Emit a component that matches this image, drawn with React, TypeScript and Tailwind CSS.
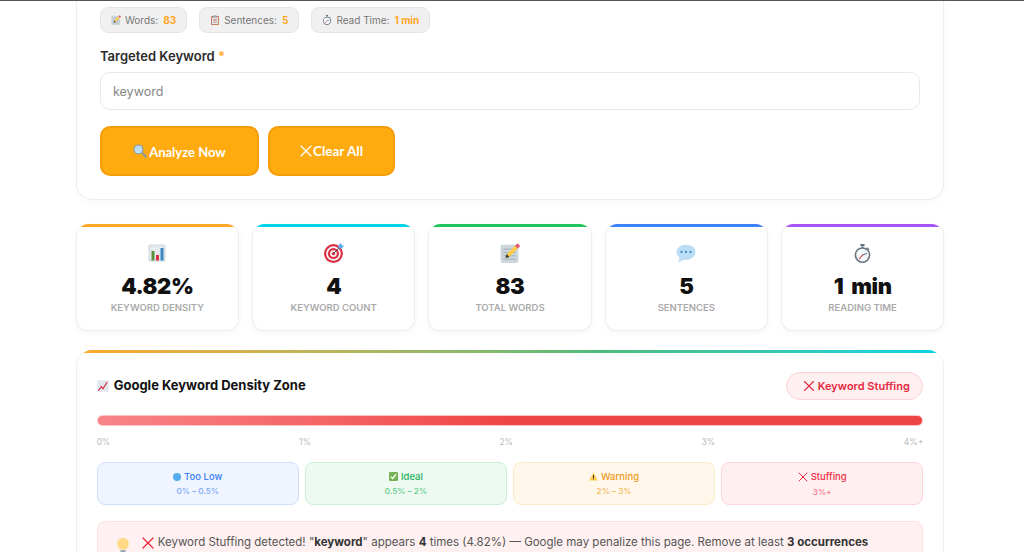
import { X } from 'lucide-react';
import type { ReactNode } from 'react';

const sans = 'font-["Inter","Noto_Sans",sans-serif]';

function MemoIcon({ className }: { className: string }) {
  return (
    <svg viewBox="0 0 36 36" className={className}>
      <rect x="1" y="3" width="32" height="33" rx="4" fill="#CCD6DD" />
      <path d="M6 11h22M6 17h22M6 23h22M6 29h22" stroke="#99AAB5" strokeWidth="1.5" />
      <path d="M12 20 27 5l5 5-15 15-7 2z" fill="#FFCC4D" />
      <path d="M27 5l3-3a2 2 0 0 1 3 0l2 2a2 2 0 0 1 0 3l-3 3z" fill="#EA596E" />
      <path d="M12 20l-2 7 7-2z" fill="#292F33" />
    </svg>
  );
}

function ClipboardIcon({ className }: { className: string }) {
  return (
    <svg viewBox="0 0 36 36" className={className}>
      <rect x="4" y="4" width="28" height="32" rx="3" fill="#C1694F" />
      <rect x="7" y="8" width="22" height="25" fill="#E1E8ED" />
      <rect x="12" y="1" width="12" height="8" rx="2" fill="#9AAAB4" />
      <path d="M11 16h14M11 21h14M11 26h14" stroke="#C1694F" strokeWidth="2" />
    </svg>
  );
}

function StopwatchIcon({ className }: { className: string }) {
  return (
    <svg viewBox="0 0 36 36" className={className}>
      <rect x="14" y="0" width="8" height="4" rx="1" fill="#66757F" />
      <rect x="16.5" y="3" width="3" height="5" fill="#66757F" />
      <path d="M27 6l4 4-2 2-4-4z" fill="#66757F" />
      <circle cx="18" cy="21" r="15" fill="#66757F" />
      <circle cx="18" cy="21" r="12" fill="#F5F8FA" />
      <path d="M18 21l8-3" stroke="#66757F" strokeWidth="2" strokeLinecap="round" />
      <path d="M18 21l-6 7" stroke="#DD2E44" strokeWidth="2" strokeLinecap="round" />
    </svg>
  );
}

function ChartIcon({ className }: { className: string }) {
  return (
    <svg viewBox="0 0 36 36" className={className}>
      <rect x="1" y="1" width="34" height="34" rx="3" fill="#CCD6DD" />
      <rect x="3" y="3" width="30" height="30" fill="#E1E8ED" />
      <path d="M3 10h30M3 17h30M3 24h30M11 3v30M18 3v30M26 3v30" stroke="#F5F8FA" strokeWidth="1" />
      <rect x="7" y="14" width="6" height="19" fill="#5C913B" />
      <rect x="16" y="22" width="6" height="11" fill="#DD2E44" />
      <rect x="25" y="8" width="6" height="25" fill="#3B88C3" />
    </svg>
  );
}

function TargetIcon({ className }: { className: string }) {
  return (
    <svg viewBox="0 0 36 36" className={className}>
      <circle cx="17" cy="19" r="17" fill="#DD2E44" />
      <circle cx="17" cy="19" r="13" fill="#F5F8FA" />
      <circle cx="17" cy="19" r="10" fill="#DD2E44" />
      <circle cx="17" cy="19" r="6" fill="#F5F8FA" />
      <circle cx="17" cy="19" r="3" fill="#DD2E44" />
      <path d="M17 19 30 6" stroke="#292F33" strokeWidth="1.5" />
      <path d="M26 10V4l5-4 1 4 4 1-4 5z" fill="#55ACEE" />
    </svg>
  );
}

function SpeechIcon({ className }: { className: string }) {
  return (
    <svg viewBox="0 0 36 36" className={className}>
      <path d="M18 3C8 3 1 9 1 16c0 4 2 7 5 10 0 3-1 6-3 8 4 0 8-2 10-4 2 .5 3 .5 5 .5 10 0 17-7 17-14.500S28 3 18 3z" fill="#BBDDF5" />
      <circle cx="10" cy="16" r="2" fill="#3B88C3" />
      <circle cx="18" cy="16" r="2" fill="#3B88C3" />
      <circle cx="26" cy="16" r="2" fill="#3B88C3" />
    </svg>
  );
}

function TrendIcon({ className }: { className: string }) {
  return (
    <svg viewBox="0 0 36 36" className={className}>
      <rect x="1" y="1" width="34" height="34" rx="3" fill="#E1E8ED" />
      <path d="M4 32 13 20l5 6L31 6" fill="none" stroke="#DD2E44" strokeWidth="3.500" />
    </svg>
  );
}

function SearchIcon({ className }: { className: string }) {
  return (
    <svg viewBox="0 0 36 36" className={className}>
      <path d="M21 23l3-3 11 11a2 2 0 0 1-4 4z" fill="#8899A6" />
      <circle cx="14" cy="14" r="13" fill="#8899A6" />
      <circle cx="14" cy="14" r="10" fill="#BBDDF5" />
    </svg>
  );
}

function Chip({ icon, label, value }: { icon: ReactNode; label: string; value: string }) {
  return (
    <div className="flex h-[26px] items-center gap-[4px] rounded-lg border border-[#e5e5e5] bg-[#f0f0f0] px-[10px] text-[10px] text-[#777]">
      {icon}
      <span className="mr-[1px]">{label}</span>
      <b className="font-bold text-[#ffa726]">{value}</b>
    </div>
  );
}

const stats = [
  { icon: <ChartIcon className="h-[18px] w-[18px]" />, value: '4.82%', label: 'KEYWORD DENSITY', bar: 'before:bg-[#ffa726]' },
  { icon: <TargetIcon className="h-[20px] w-[20px]" />, value: '4', label: 'KEYWORD COUNT', bar: 'before:bg-[#00d4e8]' },
  { icon: <MemoIcon className="h-[20px] w-[20px]" />, value: '83', label: 'TOTAL WORDS', bar: 'before:bg-[#22c55e]' },
  { icon: <SpeechIcon className="h-[20px] w-[20px]" />, value: '5', label: 'SENTENCES', bar: 'before:bg-[#3b82f6]' },
  { icon: <StopwatchIcon className="h-[19px] w-[19px]" />, value: '1 min', label: 'READING TIME', bar: 'before:bg-[#a855f7]' },
];

const zones = [
  { title: 'Too Low', range: '0% – 0.5%', box: 'border-[#cfe0fd] bg-[#eff4fe]', head: 'text-[#3b82f6]', sub: 'text-[#7aa8f8]', icon: <span className="h-2 w-2 rounded-full bg-[#55acee]" /> },
  {
    title: 'Ideal',
    range: '0.5% – 2%',
    box: 'border-[#c9f0d6] bg-[#edf9f1]',
    head: 'text-[#22b458]',
    sub: 'text-[#62cd8a]',
    icon: (
      <svg viewBox="0 0 36 36" className="h-[9px] w-[9px]">
        <rect width="36" height="36" rx="4" fill="#77B255" />
        <path d="M8 19l7 7L28 9" fill="none" stroke="#fff" strokeWidth="5" />
      </svg>
    ),
  },
  {
    title: 'Warning',
    range: '2% – 3%',
    box: 'border-[#fdeac6] bg-[#fff7e9]',
    head: 'text-[#ee9a1c]',
    sub: 'text-[#f5b95c]',
    icon: (
      <svg viewBox="0 0 36 36" className="h-[9px] w-[9px]">
        <path d="M18 2 35 34H1z" fill="#FFCC4D" />
        <path d="M16 12h4v12h-4zM16 26h4v4h-4z" fill="#292F33" />
      </svg>
    ),
  },
  { title: 'Stuffing', range: '3%+', box: 'border-[#fdd5d9] bg-[#feeff0]', head: 'text-[#ef2f45]', sub: 'text-[#f47a88]', icon: <X className="-mx-[3px] h-4 w-4 text-[#e8283f]" strokeWidth={1.5} /> },
];

const scale = ['0%', '1%', '2%', '3%', '4%+'];

export default function App() {
  return (
    <div className={`${sans} h-[552px] w-[1024px] overflow-hidden border-t border-[#555] bg-white pl-[75.700px]`}>
      <div className="w-[868.600px]">
        <section className="rounded-b-2xl border border-t-0 border-[#eeeeee] px-[23.300px] pt-[6px] pb-[23px] shadow-[0_2px_8px_rgba(0,0,0,0.03)]">
          <div className="flex gap-3">
            <Chip icon={<MemoIcon className="h-[10px] w-[10px]" />} label="Words:" value="83" />
            <Chip icon={<ClipboardIcon className="h-[10px] w-[10px]" />} label="Sentences:" value="5" />
            <Chip icon={<StopwatchIcon className="h-[10px] w-[10px]" />} label="Read Time:" value="1 min" />
          </div>
          <div className="mt-[14px] text-[13px] leading-[18px] font-semibold text-[#2b2b2b]">
            Targeted Keyword <span className="text-[#ffa726]">*</span>
          </div>
          <input
            readOnly
            placeholder="keyword"
            className="mt-[7px] block h-[38px] w-full rounded-[10px] border border-[#e8e8e8] px-3 text-[12.500px] outline-none placeholder:text-[#888]"
          />
          <div className="mt-[16px] flex gap-[9px]">
            <button className="flex h-[50px] w-[159px] items-center justify-center gap-[2px] rounded-[10px] border-2 border-[#f59e0b] bg-[#ffab10] font-['Lato',sans-serif] text-[13px] leading-[20px] font-bold text-white">
              <SearchIcon className="h-[14px] w-[14px]" />
              <span className="translate-y-[1px]">Analyze Now</span>
            </button>
            <button className="flex h-[50px] w-[127px] items-center justify-center rounded-[10px] border-2 border-[#f59e0b] bg-[#ffab10] font-['Lato',sans-serif] text-[13.500px] font-bold text-white">
              <X className="-ml-[4px] -mr-[3px] h-5 w-5" strokeWidth={1.5} />
              Clear All
            </button>
          </div>
        </section>

        <div className="mt-6 grid grid-cols-5 gap-[13px]">
          {stats.map((s) => (
            <div
              key={s.label}
              className={`relative h-[107px] overflow-hidden rounded-xl border border-t-0 border-[#eeeeee] bg-white pt-[18px] text-center shadow-[0_2px_6px_rgba(0,0,0,0.04)] before:absolute before:inset-x-0 before:top-0 before:h-[3px] before:content-[''] ${s.bar}`}
            >
              <div className="flex h-[22px] items-center justify-center">{s.icon}</div>
              <div className="mt-[9px] text-[22px] leading-[26px] font-black tracking-[-0.4px] text-[#111] [word-spacing:4px]">{s.value}</div>
              <div className="mt-[2px] text-[9.500px] leading-[14px] font-semibold text-[#aaa]">{s.label}</div>
            </div>
          ))}
        </div>

        <section className="relative mt-[19px] h-[260px] overflow-hidden rounded-t-2xl border border-t-0 border-[#eeeeee] px-[20px] pt-[22px] before:absolute before:inset-x-0 before:top-0 before:h-[3px] before:bg-gradient-to-r before:from-[#ffa726] before:via-[#4ebb7a] before:via-60% before:to-[#00d4e8] before:content-['']">
          <div className="flex h-[28px] items-center justify-between">
            <h2 className="flex items-center gap-[5px] text-[13px] font-bold text-[#111]">
              <TrendIcon className="h-[12px] w-[12px]" />
              Google Keyword Density Zone
            </h2>
            <div className="flex h-[28px] w-[137px] items-center justify-center rounded-full border border-[#fdd0d4] bg-[#feeff0] text-[11px] font-semibold text-[#e8283f]">
              <X className="h-[18px] w-[18px]" strokeWidth={1.5} />
              Keyword Stuffing
            </div>
          </div>
          <div className="mt-[15px] h-[11px] rounded-full border border-[#fbc4c6] bg-gradient-to-r from-[#f88489] via-[#ef4444] via-50% to-[#ef4444]" />
          <div className="mt-[10px] flex justify-between text-[8.500px] leading-[12px] text-[#bbb]">
            {scale.map((t) => (
              <span key={t}>{t}</span>
            ))}
          </div>
          <div className="mt-[14px] grid grid-cols-4 gap-[6px]">
            {zones.map((z) => (
              <div key={z.title} className={`flex h-[43px] flex-col items-center justify-center rounded-lg border ${z.box}`}>
                <div className={`flex items-center gap-[3px] text-[9.500px] leading-[14px] font-medium ${z.head}`}>
                  {z.icon}
                  {z.title}
                </div>
                <div className={`mt-[1px] text-[8.200px] leading-[13px] font-medium ${z.sub}`}>{z.range}</div>
              </div>
            ))}
          </div>
          <div className="mt-[16px] flex h-[60px] items-start rounded-lg border border-[#fde0e2] bg-[#fff1f1] pt-[12px] pl-[17px] text-[11.500px] leading-[17px] text-[#555]">
            <svg viewBox="0 0 36 36" className="mt-[4px] mr-[7px] h-[16px] w-[16px] shrink-0">
              <path d="M18 0C10 0 5 6 5 13c0 6 4 9 6 13h14c2-4 6-7 6-13 0-7-5-13-13-13z" fill="#FFD983" />
              <rect x="12" y="27" width="12" height="9" rx="2" fill="#99AAB5" />
            </svg>
            <X className="h-5 w-5 shrink-0 -translate-y-[1px] text-[#e8283f]" strokeWidth={1.5} />
            <span className="whitespace-nowrap">
              Keyword Stuffing detected! "<b className="font-bold text-[#333]">keyword</b>" appears <b className="font-bold text-[#333]">4</b> times (4.82%) — Google may penalize this page. Remove at least <b className="font-bold text-[#333]">3 occurrences</b>
            </span>
          </div>
        </section>
      </div>
    </div>
  );
}
